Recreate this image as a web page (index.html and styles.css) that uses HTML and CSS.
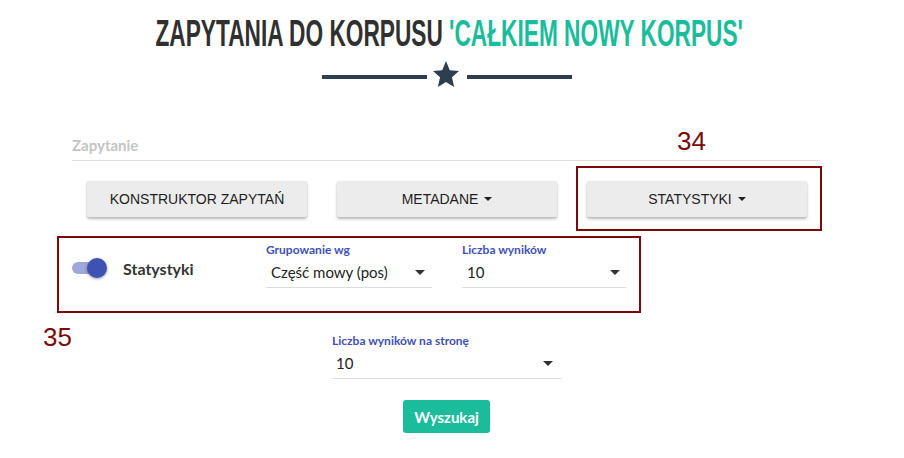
FILE: index.html
```html
<!DOCTYPE html>
<html lang="pl">
<head>
<meta charset="utf-8">
<link rel="stylesheet" href="styles.css">
</head>
<body>
<div class="page">
  <h1 class="title"><span class="title-text">ZAPYTANIA DO KORPUSU <span class="accent">'CAŁKIEM NOWY KORPUS'</span></span></h1>
  <div class="divider">
    <span class="divider-line"></span>
    <svg class="star" width="26" height="26" viewBox="1.3 1.5 21.4 20.2" preserveAspectRatio="none"><path d="M12 1.5l3.1 7.1 7.6.6-5.8 5 1.8 7.5L12 17.8l-6.7 3.9 1.8-7.5-5.8-5 7.6-.6z" fill="#2c3e50"/></svg>
    <span class="divider-line"></span>
  </div>

  <div class="query-field">Zapytanie</div>

  <div class="button-row">
    <button class="raised-btn">KONSTRUKTOR ZAPYTAŃ</button>
    <button class="raised-btn">METADANE <span class="caret"></span></button>
    <button class="raised-btn">STATYSTYKI <span class="caret"></span></button>
  </div>

  <div class="stats-row">
    <div class="toggle-group">
      <span class="toggle"><span class="toggle-track"></span><span class="toggle-knob"></span></span>
      <span class="toggle-label">Statystyki</span>
    </div>
    <div class="select select-group">
      <div class="select-label">Grupowanie wg</div>
      <div class="select-value"><span>Część mowy (pos)</span><span class="arrow"></span></div>
    </div>
    <div class="select select-count">
      <div class="select-label">Liczba wyników</div>
      <div class="select-value"><span>10</span><span class="arrow"></span></div>
    </div>
  </div>

  <div class="page-row">
    <div class="select select-page">
      <div class="select-label">Liczba wyników na stronę</div>
      <div class="select-value"><span>10</span><span class="arrow"></span></div>
    </div>
  </div>

  <div class="submit-row">
    <button class="submit-btn">Wyszukaj</button>
  </div>

  <div class="annot-box box-34"></div>
  <div class="annot-num num-34">34</div>
  <div class="annot-box box-35"></div>
  <div class="annot-num num-35">35</div>
</div>
</body>
</html>
```
FILE: styles.css
```css
* { box-sizing: border-box; }
html, body { margin: 0; padding: 0; background: #fff; }
body { font-family: Lato, "Open Sans", sans-serif; color: #222; width: 904px; height: 458px; overflow: hidden; }
.page { position: relative; width: 904px; height: 458px; }

.title {
  margin: 0;
  padding-top: 15.5px;
  padding-right: 5px;
  height: 52px;
  display: flex;
  justify-content: center;
  font-family: "Liberation Sans", Arial, sans-serif;
  font-weight: 700;
  font-size: 36px;
  line-height: 36px;
  color: #303030;
  white-space: nowrap;
}
.title-text { display: inline-block; transform: scaleX(0.63); transform-origin: 50% 50%; }
.accent { color: #1abc9c; }

.divider {
  margin-top: 9px;
  height: 26px;
  display: flex;
  align-items: center;
  justify-content: center;
  padding-right: 10px;
}
.divider-line { width: 105px; height: 4px; background: #2c3e50; margin-top: 6px; }
.star { display: block; margin: 0 8px 0 6px; }

.query-field {
  margin: 43px 0 0 72px;
  width: 748px;
  height: 31px;
  line-height: 30px;
  border-bottom: 1px solid #dedede;
  font-size: 15px;
  font-weight: 700;
  color: #c4c4c4;
}

.button-row {
  margin-top: 20px;
  padding-left: 87px;
  display: flex;
  gap: 30px;
}
.raised-btn {
  width: 220px;
  height: 36px;
  border: none;
  border-radius: 2px;
  background: #ececec;
  box-shadow: 0 2px 3px rgba(0,0,0,0.28), 0 0 1px rgba(0,0,0,0.12);
  font-family: "Liberation Sans", Arial, sans-serif;
  font-size: 14px;
  color: #1e1e1e;
  display: flex;
  align-items: center;
  justify-content: center;
  padding: 0;
}
.caret {
  display: inline-block;
  margin-left: 6px;
  width: 0; height: 0;
  border-left: 4px solid transparent;
  border-right: 4px solid transparent;
  border-top: 4px solid #222;
}

.stats-row {
  margin-top: 26px;
  display: flex;
  align-items: flex-start;
}
.toggle-group {
  margin: 13px 0 0 72px;
  width: 194px;
  height: 24px;
  display: flex;
  align-items: center;
}
.toggle { position: relative; width: 36px; height: 20px; display: block; }
.toggle-track { position: absolute; left: 0; top: 4px; width: 34px; height: 12px; border-radius: 6px; background: #9fa8da; }
.toggle-knob { position: absolute; left: 15px; top: 0; width: 20px; height: 20px; border-radius: 50%; background: #3f51b5; box-shadow: 0 1px 3px rgba(0,0,0,0.4); }
.toggle-label { margin-left: 15px; font-size: 16px; font-weight: 700; color: #333; }

.select { display: flex; flex-direction: column; }
.select-label { height: 14px; line-height: 14px; font-size: 12px; font-weight: 700; color: #3f51b5; }
.select-value {
  height: 31px;
  line-height: 30px;
  border-bottom: 1px solid #dcdcdc;
  font-size: 15px;
  color: #222;
  padding: 0 7px 0 5px;
  display: flex;
  justify-content: space-between;
  align-items: center;
}
.arrow {
  width: 0; height: 0;
  border-left: 5px solid transparent;
  border-right: 5px solid transparent;
  border-top: 5px solid #333;
}
.select-group { width: 166px; }
.select-count { width: 165px; margin-left: 30px; }

.page-row { margin: 46px 0 0 332px; }
.select-page { width: 230px; }
.select-page .select-value { padding-left: 4px; padding-right: 9px; }

.submit-row { margin-top: 21px; display: flex; justify-content: center; padding-right: 11px; }
.submit-btn {
  width: 87px;
  height: 33px;
  border: none;
  border-radius: 3px;
  background: #1abc9c;
  color: #fff;
  font-family: Lato, sans-serif;
  font-weight: 700;
  font-size: 15px;
  padding: 0;
}

.annot-box { position: absolute; border: 2px solid #7a0a0a; }
.box-34 { left: 576px; top: 166px; width: 246px; height: 65px; }
.box-35 { left: 57px; top: 236px; width: 584px; height: 77px; }
.annot-num { position: absolute; font-family: "Liberation Sans", Arial, sans-serif; font-size: 26px; line-height: 26px; color: #7a0a0a; }
.num-34 { left: 677px; top: 128px; }
.num-35 { left: 43px; top: 324px; }
```
